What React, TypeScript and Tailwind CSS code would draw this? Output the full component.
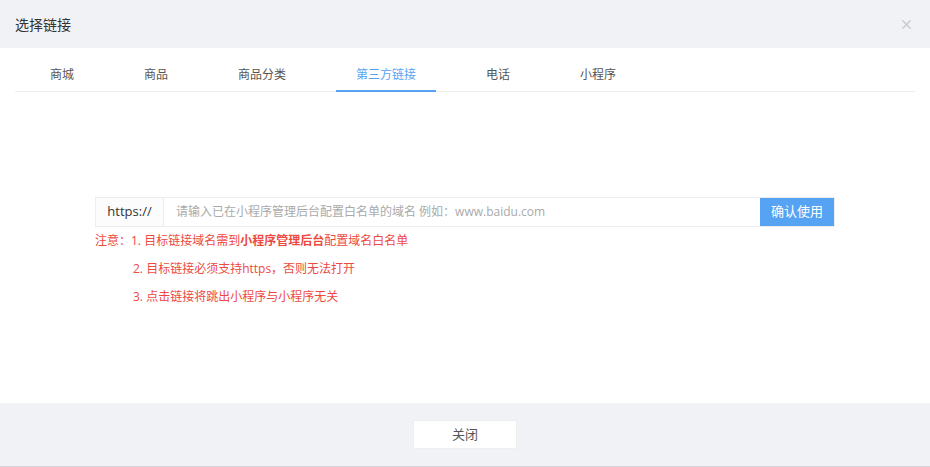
import { X } from 'lucide-react'

const tabs = ['商城', '商品', '商品分类', '第三方链接', '电话', '小程序']

export default function App() {
  const active = 3
  return (
    <div
      className="w-[930px] h-[467px] flex flex-col bg-white text-[#333]"
      style={{ fontFamily: '"Open Sans", "Noto Sans CJK SC", sans-serif' }}
    >
      <div className="h-[48px] shrink-0 bg-[#f1f2f6] flex items-center justify-between pl-[15px] pr-[16px]">
        <h3 className="text-[14px] text-[#333]">选择链接</h3>
        <X size={15} strokeWidth={2.2} className="text-[#c8c8c8]" />
      </div>

      <div className="flex-1 px-[15px]">
        <div className="mt-[12px] flex gap-[30px] pl-[15px] border-b border-[#eeeeee]">
          {tabs.map((t, i) => (
            <div
              key={t}
              className={
                i === active
                  ? 'h-[32px] -mb-px px-[20px] flex items-center text-[12px] text-[#57a3f3] border-b-2 border-[#57a3f3]'
                  : 'h-[32px] -mb-px px-[20px] flex items-center text-[12px] text-[#555] border-b-2 border-transparent'
              }
            >
              {t}
            </div>
          ))}
        </div>

        <div className="w-[740px] mx-auto mt-[105px]">
          <div className="flex h-[30px] border border-[#eeeeee]">
            <div className="w-[68px] shrink-0 flex items-center justify-center text-[13px] text-[#333] bg-[#fcfcfc] border-r border-[#eeeeee]">
              https://
            </div>
            <input
              className="flex-1 min-w-0 pl-[12px] text-[12px] outline-none placeholder:text-[#aaa]"
              placeholder="请输入已在小程序管理后台配置白名单的域名 例如：www.baidu.com"
            />
            <button className="w-[74px] shrink-0 bg-[#57a3f3] text-white text-[13px]">确认使用</button>
          </div>
          <div className="text-[12px] text-[#ed4a3f] leading-[28px]">
            <p>
              注意：1. 目标链接域名需到<strong className="font-bold">小程序管理后台</strong>配置域名白名单
            </p>
            <p className="pl-[38px]">2. 目标链接必须支持https，否则无法打开</p>
            <p className="pl-[38px]">3. 点击链接将跳出小程序与小程序无关</p>
          </div>
        </div>
      </div>

      <div className="h-[64px] shrink-0 bg-[#f1f2f6] border-b border-[#d4d4d8] flex items-center justify-center">
        <button className="w-[104px] h-[29px] bg-white border border-[#eeeeee] text-[13px] text-[#555]">关闭</button>
      </div>
    </div>
  )
}
